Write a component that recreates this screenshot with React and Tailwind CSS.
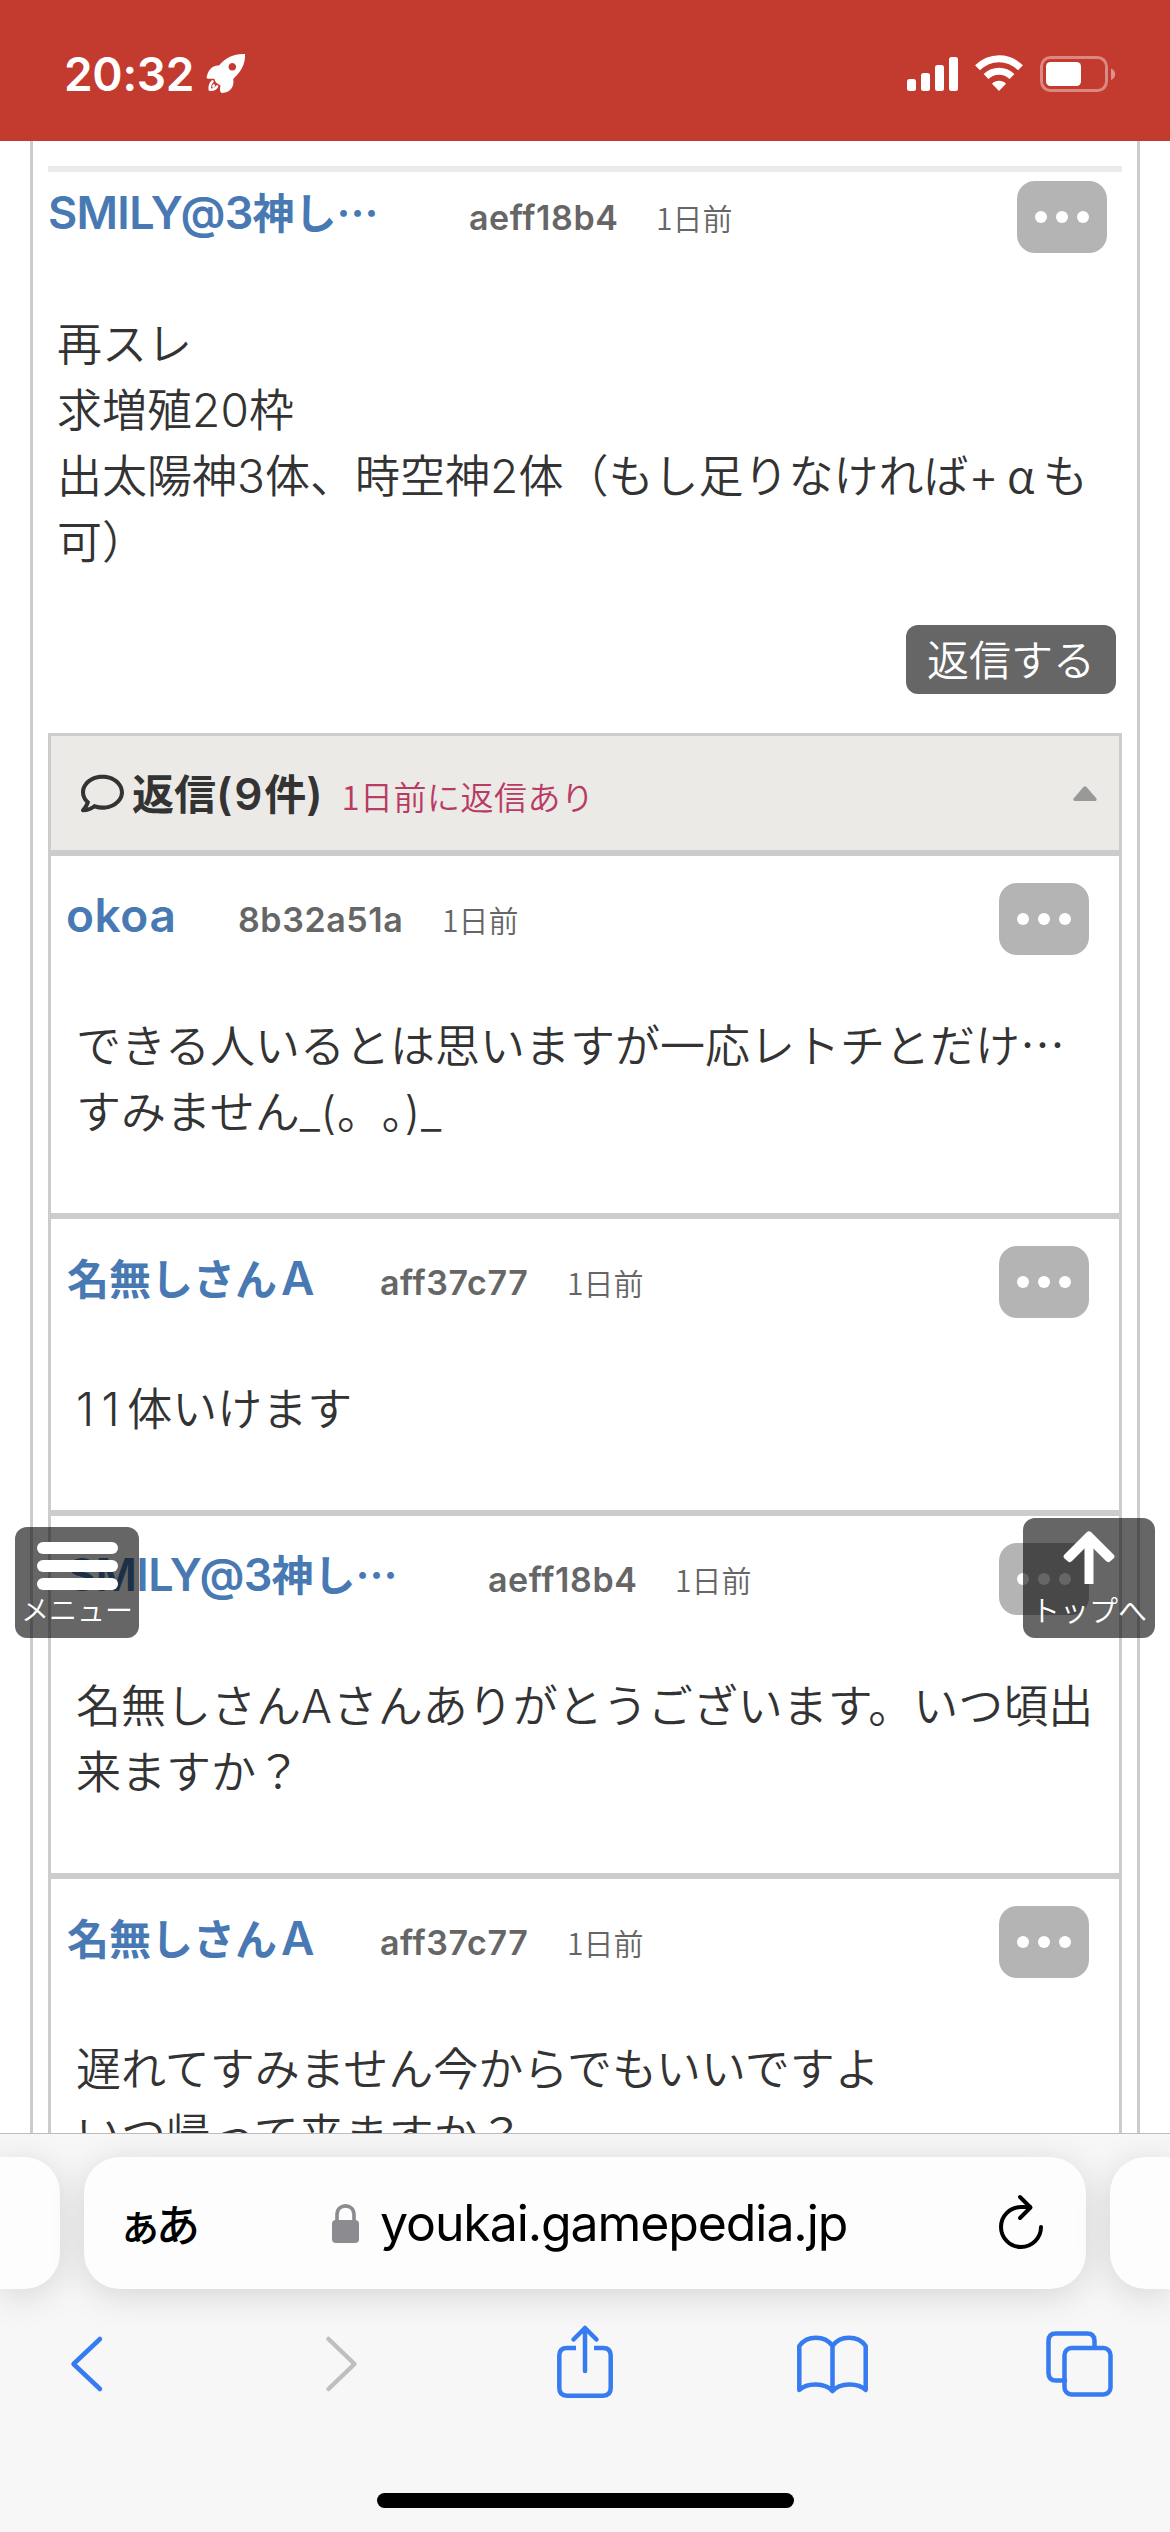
import React from "react";
import { FaRegComment } from "react-icons/fa";

const thread = {
  name: "SMILY@3神し…",
  id: "aeff18b4",
  date: "1日前",
  nameWidth: "w-[421px]",
  nameLatin: "text-[45px] tracking-[-0.7px]",
  idWidth: "w-[187px]",
  bodyLatin: "text-[46px] tracking-[0.2px]",
  lines: [
    "再スレ",
    "求増殖20枠",
    "出太陽神3体、時空神2体（もし足りなければ+αも",
    "可）",
  ],
};

const replies = [
  {
    name: "okoa",
    id: "8b32a51a",
    date: "1日前",
    nameWidth: "w-[171px]",
    nameLatin: "text-[46px] tracking-[0.6px] ml-[-1px]",
    idWidth: "w-[204px]",
    bodyLatin: "tracking-[0.8px]",
    lines: [
      "できる人いるとは思いますが一応レトチとだけ…",
      "すみません_(。｡)_",
    ],
  },
  {
    name: "名無しさんA",
    id: "aff37c77",
    date: "1日前",
    nameWidth: "w-[313px]",
    nameLatin: "text-[46px] ml-[4px]",
    idWidth: "w-[187px]",
    bodyLatin: "text-[46px] tracking-[7.5px]",
    lines: ["11体いけます"],
  },
  {
    name: "SMILY@3神し…",
    id: "aeff18b4",
    date: "1日前",
    nameWidth: "w-[421px]",
    nameLatin: "text-[45px] tracking-[-0.7px]",
    idWidth: "w-[187px]",
    bodyLatin: "text-[46px] tracking-[0.8px]",
    lines: ["名無しさんAさんありがとうございます。いつ頃出", "来ますか？"],
  },
  {
    name: "名無しさんA",
    id: "aff37c77",
    date: "1日前",
    nameWidth: "w-[313px]",
    nameLatin: "text-[46px] ml-[4px]",
    idWidth: "w-[187px]",
    bodyLatin: "",
    lines: ["遅れてすみません今からでもいいですよ", "いつ帰って来ますか？"],
  },
];

// Latin runs use Inter, everything else falls to the Japanese face
const MixedText = ({ text, latinClass }) => {
  return text.split(/([A-Za-z0-9@+_()]+|α)/).map((part, index) => {
    if (part === "α") {
      // full width cell
      return (
        <span key={index} className="inline-block w-[44px] text-center">
          {part}
        </span>
      );
    }

    return index % 2 === 1 ? (
      <span key={index} className={latinClass}>
        {part}
      </span>
    ) : (
      <span key={index}>{part}</span>
    );
  });
};

const StatusBar = () => {
  return (
    <header className="h-[141px] shrink-0 bg-[#c33a2f] flex items-start justify-between pl-[64px] pr-[54px] text-white">
      <div className="flex items-center pt-[44px]">
        <span className="font-['Inter'] font-semibold text-[46px] leading-[60px] w-[131px] whitespace-nowrap tracking-[-0.3px]">
          20:32
        </span>
        <svg className="w-[60px] h-[60px]" viewBox="0 0 60 60">
          <path
            fill="currentColor"
            fillRule="evenodd"
            d="M50 10C39 9.500 30 14 24 21.500C17 21 13 26 11.500 34C13 35.500 17 34 19.500 35C20 38.500 23 40 25.500 41.500C25 45 24.500 47 26.500 49C33 48.500 38 46 38.500 38C38.500 36.500 38 35.500 38.500 34.500C46 28 50.500 20 50 10ZM37.300 19a3.800 3.800 0 1 0 .01 0Z"
          />
          <path
            fill="none"
            stroke="currentColor"
            strokeWidth="2.6"
            strokeLinecap="round"
            strokeLinejoin="round"
            d="M17.500 37.500C15 39.500 14.500 42 14.800 45.700C18 46 20.500 45.300 22 42.500M18.700 41.500L18.400 42.500"
          />
        </svg>
      </div>
      <div className="flex pt-[55px] items-start">
        <svg className="w-[209px] h-[38px]" viewBox="907 55 209 38">
          <g fill="#fff">
            <rect x="907" y="79" width="9" height="12" rx="2.500" />
            <rect x="921" y="73" width="9" height="18" rx="2.500" />
            <rect x="935" y="65" width="9" height="26" rx="2.500" />
            <rect x="949" y="57" width="9" height="34" rx="2.500" />
          </g>
          <g fill="none" stroke="#fff" strokeWidth="7">
            <path d="M977.500 67.800C990 55.700 1008 55.700 1020.500 67.800" />
            <path d="M986 76.500C993.500 69.500 1004.500 69.500 1012 76.500" />
          </g>
          <path fill="#fff" d="M999 91L992 83.700C996 79.900 1002 79.900 1006 83.700Z" />
          <rect
            x="1041.500"
            y="57.500"
            width="65"
            height="33"
            rx="9"
            fill="none"
            stroke="#fff"
            strokeOpacity="0.4"
            strokeWidth="3"
          />
          <rect x="1046" y="62" width="35" height="24" rx="4.500" fill="#fff" />
          <path
            fill="#fff"
            fillOpacity="0.45"
            d="M1111 68.500C1116.500 70.500 1116.500 78 1111 80Z"
          />
        </svg>
      </div>
    </header>
  );
};

const MoreButton = () => {
  return (
    <button className="ml-auto w-[90px] h-[72px] rounded-[18px] bg-[#b4b4b4] flex items-center justify-center gap-[9px]">
      <span className="size-3 rounded-full bg-white" />
      <span className="size-3 rounded-full bg-white" />
      <span className="size-3 rounded-full bg-white" />
    </button>
  );
};

const PostHeader = ({ post }) => {
  return (
    <div className="h-[72px] flex items-center whitespace-nowrap">
      <span
        className={`${post.nameWidth} shrink-0 pb-[10px] text-[42px] leading-[60px] font-bold text-[#4879b3]`}
      >
        <MixedText
          text={post.name}
          latinClass={`font-['Inter'] font-semibold ${post.nameLatin}`}
        />
      </span>
      <span
        className={`${post.idWidth} shrink-0 pt-[2px] font-['Inter'] font-semibold text-[34px] leading-[40px] tracking-[0.6px] text-[#666]`}
      >
        {post.id}
      </span>
      <span className="text-[30px] leading-[40px] font-[350] text-[#666]">
        {post.date}
      </span>
      <MoreButton />
    </div>
  );
};

const PostBody = ({ post }) => {
  return (
    <div className="mt-[56px] text-[45px] leading-[66px] font-[350] text-[#333] whitespace-nowrap">
      {post.lines.map((line) => {
        return (
          <p key={line} className="h-[66px]">
            <MixedText
              text={line}
              latinClass={`font-['Inter'] ${post.bodyLatin}`}
            />
          </p>
        );
      })}
    </div>
  );
};

const Reply = ({ post }) => {
  return (
    <li className="pt-[27px] pb-[70px] pl-4 pr-[30px] border-b-[6px] border-[#ccc]">
      <PostHeader post={post} />
      <div className="pl-[9px]">
        <PostBody post={post} />
      </div>
    </li>
  );
};

const FloatingButtons = () => {
  return (
    <>
      <button className="absolute left-[15px] top-[1386px] w-[124px] h-[111px] rounded-xl bg-black/60 text-white pt-[15px] flex flex-col items-center">
        <span className="flex flex-col gap-[6px] items-center">
          <span className="w-[81px] h-3 rounded-full bg-white" />
          <span className="w-[81px] h-3 rounded-full bg-white" />
          <span className="w-[81px] h-3 rounded-full bg-white" />
        </span>
        <span className="mt-[2px] text-[28px] leading-[34px] font-[350] whitespace-nowrap">
          メニュー
        </span>
      </button>
      <button className="absolute left-[1023px] top-[1377px] w-[132px] h-[120px] rounded-xl bg-black/60 text-white pt-[12px] flex flex-col items-center">
        <svg className="w-[54px] h-[56px]" viewBox="0 0 54 56">
          <path
            fill="none"
            stroke="currentColor"
            strokeWidth="9"
            d="M27 54V8"
          />
          <path
            fill="currentColor"
            d="M24.500 2.500Q27 0 29.500 2.500L51.500 24.500Q53.500 26.500 51.500 28.500L48 31.500Q46 33 44 31L27 14L10 31Q8 33 6 31.500L2.500 28.500Q.5 26.500 2.500 24.500Z"
          />
        </svg>
        <span className="mt-[5px] text-[29px] leading-[36px] font-[350] whitespace-nowrap">
          トップへ
        </span>
      </button>
    </>
  );
};

const AddressBar = () => {
  return (
    <div className="flex gap-6 h-[132px]">
      <div className="w-[60px] rounded-r-[36px] bg-[#fdfdfd] shadow-[0_6px_36px_rgba(0,0,0,0.14)]" />
      <div className="w-[1002px] rounded-[36px] bg-[#fdfdfd] shadow-[0_6px_36px_rgba(0,0,0,0.14)] flex items-center pl-[34px] pr-[42px] text-black">
        <span className="w-[214px] text-[44px] leading-[60px] font-medium tracking-[-6px] whitespace-nowrap">
          ぁあ
        </span>
        <svg className="w-[27px] h-[39px]" viewBox="0 0 27 39">
          <rect y="16" width="27" height="23" rx="4" fill="#8b8b90" />
          <path
            d="M5 18V10.500C5 -1 22 -1 22 10.500V18"
            fill="none"
            stroke="#8b8b90"
            strokeWidth="3.6"
          />
        </svg>
        <span className="ml-[21px] font-['Inter'] text-[50px] leading-[66px] tracking-[-1.1px] whitespace-nowrap">
          youkai.gamepedia.jp
        </span>
        <svg
          className="ml-auto w-[46px] h-[58px]"
          viewBox="0 0 46 58"
          fill="none"
          stroke="currentColor"
          strokeWidth="4"
          strokeLinecap="round"
          strokeLinejoin="round"
        >
          <path d="M43 33A20 20 0 1 1 23 13H32" />
          <path d="M22 3L32.500 13.500L22 24" />
        </svg>
      </div>
      <div className="w-[60px] rounded-l-[36px] bg-[#fdfdfd] shadow-[0_6px_36px_rgba(0,0,0,0.14)]" />
    </div>
  );
};

const Toolbar = () => {
  return (
    <nav className="h-[204px] pt-[34px]">
      <svg
        className="w-full h-[80px]"
        viewBox="0 2323 1170 80"
        fill="none"
        stroke="#367bf0"
        strokeWidth="4.5"
        strokeLinecap="round"
        strokeLinejoin="round"
      >
        <path d="M100 2339L73.500 2364L100 2389" />
        <path d="M328.500 2339L354.500 2364L328.500 2389" stroke="#bfbfc1" />
        {/* share */}
        <path
          strokeLinecap="butt"
          d="M576 2348H567Q559.300 2348 559.300 2355.500V2388Q559.300 2395.700 567 2395.700H603Q610.700 2395.700 610.700 2388V2355.500Q610.700 2348 603 2348H594"
        />
        <path d="M585 2371V2328M573.500 2339.500L585 2328L596.500 2339.500" />
        {/* bookmarks */}
        <path d="M832.500 2346C825 2335 807 2335 799.300 2346V2390C807 2382.500 825 2382.500 832.500 2391C840 2382.500 858 2382.500 865.700 2390V2346C858 2335 840 2335 832.500 2346V2391" />
        {/* tabs */}
        <path d="M1065 2380.500H1056Q1048.500 2380.500 1048.500 2373V2341Q1048.500 2333.500 1056 2333.500H1087Q1094.500 2333.500 1094.500 2341V2347" />
        <rect x="1064.500" y="2348" width="46" height="46.500" rx="7" />
      </svg>
    </nav>
  );
};

function App() {
  return (
    <div
      lang="ja"
      className="w-[1170px] h-[2532px] flex flex-col overflow-hidden bg-white font-['Noto_Sans_CJK_JP',sans-serif]"
    >
      <StatusBar />

      <main className="relative h-[1992px] shrink-0 overflow-hidden">
        <div className="mx-[30px] border-x-[3px] border-[#ccc] px-[15px] pt-[25px]">
          <article className="border-t-[6px] border-[#ebebe9] pt-[9px]">
            <div className="pr-[15px]">
              <PostHeader post={thread} />
            </div>
            <div className="pl-[9px]">
              <PostBody post={thread} />
            </div>
            <div className="mt-[52px] pr-[6px] flex justify-end">
              <button className="w-[210px] h-[69px] pb-[3px] rounded-xl bg-[#666] text-white text-[42px] leading-[64px] font-[350] whitespace-nowrap">
                返信する
              </button>
            </div>
          </article>

          <section className="mt-[39px] border-x-[3px] border-t-[3px] border-[#ccc]">
            <div className="h-[120px] border-b-[6px] border-[#ccc] bg-[#ebeae6] flex items-center pl-[30px] pr-[22px] text-[#333] whitespace-nowrap">
              <FaRegComment className="size-[43px]" />
              <h2 className="ml-2 text-[42px] leading-[60px] font-bold">
                <MixedText
                  text="返信(9件)"
                  latinClass="font-['Inter'] font-semibold text-[44px] tracking-[1.8px]"
                />
              </h2>
              <span className="ml-[17px] mt-[5px] text-[33px] leading-[48px] font-[350] tracking-[0.5px] text-[#b93a62]">
                1日前に返信あり
              </span>
              <svg className="ml-auto w-6 h-[15px]" viewBox="0 0 24 15">
                <path
                  fill="#999"
                  d="M10.500 1Q12 -.5 13.500 1L23.500 12.500Q24 15 22 15H2Q0 15 .5 12.500Z"
                />
              </svg>
            </div>
            <ul>
              {replies.map((post, index) => {
                return <Reply key={post.id + index} post={post} />;
              })}
            </ul>
          </section>
        </div>

        <FloatingButtons />
      </main>

      <footer className="h-[399px] shrink-0 border-t border-[#bdbdbd] bg-[#f7f7f7] pt-[23px] overflow-hidden">
        <AddressBar />
        <Toolbar />
        <div className="mx-auto w-[417px] h-[15px] rounded-full bg-black" />
      </footer>
    </div>
  );
}

export default App;
